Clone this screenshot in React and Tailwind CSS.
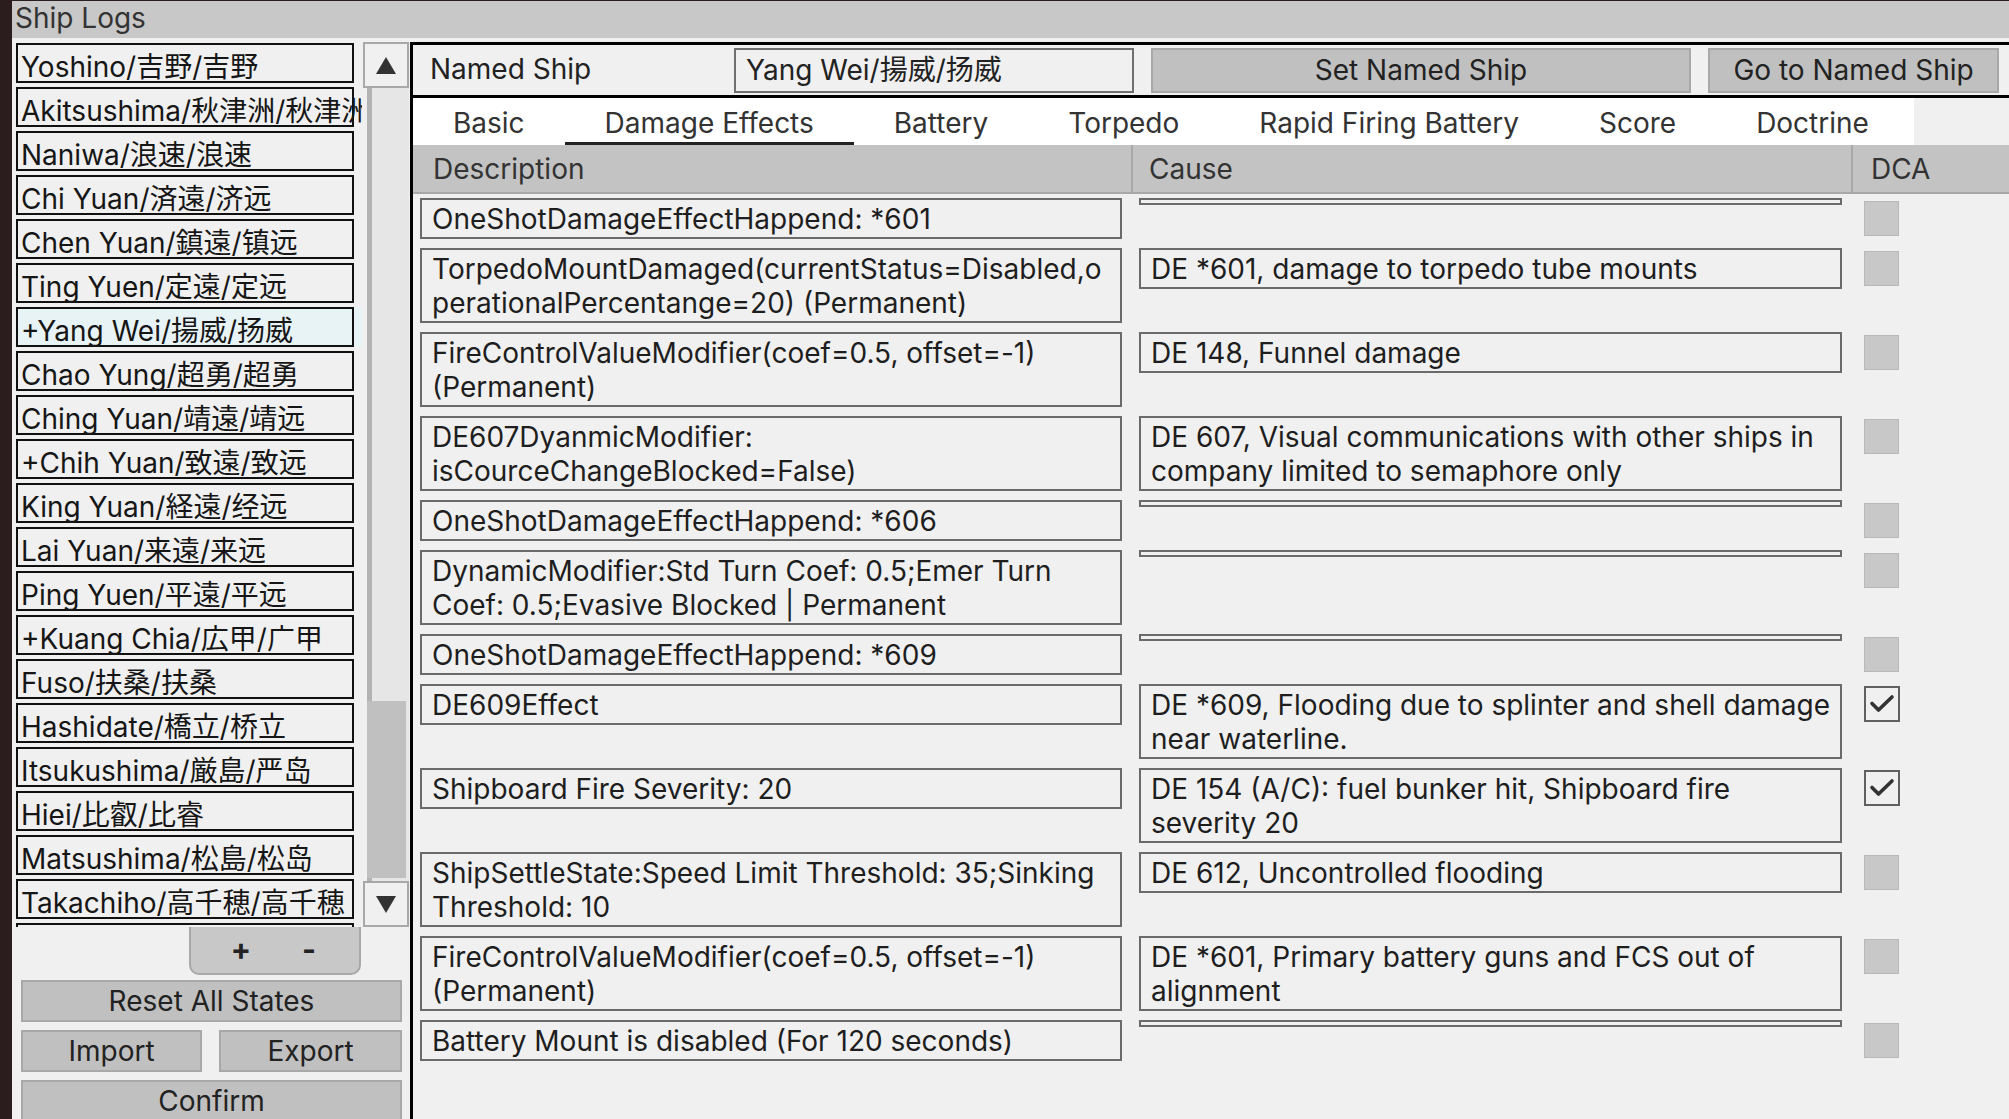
import React from 'react';

// --- DATA ---
const SHIPS = [
  'Yoshino/吉野/吉野',
  'Akitsushima/秋津洲/秋津洲',
  'Naniwa/浪速/浪速',
  'Chi Yuan/済遠/济远',
  'Chen Yuan/鎮遠/镇远',
  'Ting Yuen/定遠/定远',
  '+Yang Wei/揚威/扬威',
  'Chao Yung/超勇/超勇',
  'Ching Yuan/靖遠/靖远',
  '+Chih Yuan/致遠/致远',
  'King Yuan/経遠/经远',
  'Lai Yuan/来遠/来远',
  'Ping Yuen/平遠/平远',
  '+Kuang Chia/広甲/广甲',
  'Fuso/扶桑/扶桑',
  'Hashidate/橋立/桥立',
  'Itsukushima/厳島/严岛',
  'Hiei/比叡/比睿',
  'Matsushima/松島/松岛',
  'Takachiho/高千穂/高千穂',
  'Akagi/赤城/赤城',
];

const SELECTED = '+Yang Wei/揚威/扬威';

const TABS = ['Basic', 'Damage Effects', 'Battery', 'Torpedo', 'Rapid Firing Battery', 'Score', 'Doctrine'];

// lines are broken where the game UI breaks them
const EFFECTS = [
  { desc: 'OneShotDamageEffectHappend: *601', cause: '', dca: false },
  {
    desc: 'TorpedoMountDamaged(currentStatus=Disabled,o\nperationalPercentange=20) (Permanent)',
    cause: 'DE *601, damage to torpedo tube mounts',
    dca: false,
  },
  { desc: 'FireControlValueModifier(coef=0.5, offset=-1)\n(Permanent)', cause: 'DE 148, Funnel damage', dca: false },
  {
    desc: 'DE607DyanmicModifier:\nisCourceChangeBlocked=False)',
    cause: 'DE 607, Visual communications with other ships in\ncompany limited to semaphore only',
    dca: false,
  },
  { desc: 'OneShotDamageEffectHappend: *606', cause: '', dca: false },
  {
    desc: 'DynamicModifier:Std Turn Coef: 0.5;Emer Turn\nCoef: 0.5;Evasive Blocked | Permanent',
    cause: '',
    dca: false,
  },
  { desc: 'OneShotDamageEffectHappend: *609', cause: '', dca: false },
  { desc: 'DE609Effect', cause: 'DE *609, Flooding due to splinter and shell damage\nnear waterline.', dca: true },
  { desc: 'Shipboard Fire Severity: 20', cause: 'DE 154 (A/C): fuel bunker hit, Shipboard fire\nseverity 20', dca: true },
  {
    desc: 'ShipSettleState:Speed Limit Threshold: 35;Sinking\nThreshold: 10',
    cause: 'DE 612, Uncontrolled flooding',
    dca: false,
  },
  {
    desc: 'FireControlValueModifier(coef=0.5, offset=-1)\n(Permanent)',
    cause: 'DE *601, Primary battery guns and FCS out of\nalignment',
    dca: false,
  },
  { desc: 'Battery Mount is disabled (For 120 seconds)', cause: '', dca: false },
];

// --- SMALL PIECES ---
const Arrow = ({ down }) => (
  <svg width="22" height="19" viewBox="0 0 22 19">
    <polygon points={down ? '1,1 21,1 11,18' : '11,1 21,18 1,18'} fill="#333" />
  </svg>
);

const GreyButton = ({ children, className = '' }) => (
  <div
    className={`flex h-[42px] shrink-0 items-center justify-center border-2 border-[#a8a8a8] bg-[#c0c0c0] text-[28px] text-[#222] ${className}`}
  >
    {children}
  </div>
);

const Cell = ({ text, className }) => (
  <div
    className={`shrink-0 whitespace-pre border-2 border-[#6a6a6a] bg-[#f0f0f0] pb-[1px] pl-[10px] pt-[2px] text-[28px] leading-[34px] text-[#1e1e1e] ${className}`}
  >
    {text}
  </div>
);

const Check = ({ on }) =>
  on ? (
    <div className="ml-[22px] mt-[2px] h-[36px] w-[36px] shrink-0 border-2 border-[#606060] bg-[#f0f0f0]">
      <svg viewBox="0 0 32 32" className="h-full w-full">
        <path
          d="M6 15.5 L12.5 22 L26 9"
          fill="none"
          stroke="#333"
          strokeWidth="3.6"
          strokeLinecap="round"
          strokeLinejoin="round"
        />
      </svg>
    </div>
  ) : (
    <div className="ml-[22px] mt-[3px] h-[35px] w-[35px] shrink-0 border border-[#b8b8b8] bg-[#c8c8c8]" />
  );

// --- LEFT PANEL ---
const ShipList = () => (
  <div className="flex w-[398px] shrink-0 flex-col pl-[4px] pt-[4px]">
    <div className="flex h-[885px] shrink-0">
      <div className="w-[346px] shrink-0 overflow-hidden pt-[1px]">
        {SHIPS.map((name) => (
          <div key={name} className={`mb-[4px] h-[40px] ${name === SELECTED ? 'bg-[#e8f3f6]' : ''}`}>
            <div className="h-[40px] w-[338px] whitespace-nowrap border-2 border-[#111] pl-[3px] pt-[8px] text-[28px] leading-[28px] text-[#161616]">
              {name}
            </div>
          </div>
        ))}
      </div>

      {/* scrollbar */}
      <div className="ml-[1px] flex w-[46px] shrink-0 flex-col">
        <div className="flex h-[46px] shrink-0 items-center justify-center border-2 border-[#a8a8a8] bg-[#f0f0f0]">
          <Arrow />
        </div>
        <div className="ml-[4px] flex flex-1 flex-col justify-end border-l-[5px] border-[#b2b2b2] bg-[#e6e6e6] pb-[3px]">
          <div className="-ml-[5px] h-[177px] w-[39px] bg-[#c0c0c0]" />
        </div>
        <div className="flex h-[46px] shrink-0 items-center justify-center border-2 border-[#a8a8a8] bg-[#f0f0f0]">
          <Arrow down />
        </div>
      </div>
    </div>

    <div className="ml-[173px] flex h-[48px] w-[172px] shrink-0 items-center justify-center gap-[28px] rounded-b-[10px] border-2 border-t-0 border-[#a8a8a8] bg-[#c8c8c8] pb-[2px] text-[30px] font-bold text-[#222]">
      <span className="w-[40px] text-center">+</span>
      <span className="w-[40px] text-center">-</span>
    </div>

    <GreyButton className="ml-[5px] mt-[5px] w-[381px]">Reset All States</GreyButton>
    <div className="ml-[5px] mt-[8px] flex w-[381px] shrink-0">
      <GreyButton className="w-[181px]">Import</GreyButton>
      <GreyButton className="ml-[17px] flex-1">Export</GreyButton>
    </div>
    <GreyButton className="ml-[5px] mt-[8px] w-[381px]">Confirm</GreyButton>
  </div>
);

// --- RIGHT PANEL ---
const ShipDetail = () => (
  <div className="mt-[4px] flex min-w-0 flex-1 flex-col border-l-[3px] border-t-[3px] border-black">
    {/* named ship row */}
    <div className="flex h-[53px] shrink-0 items-center border-b-[3px] border-black pl-[17px] pr-[10px] text-[28px] text-[#222]">
      <div className="w-[304px] shrink-0 pb-[2px] leading-[34px]">Named Ship</div>
      <div className="flex h-[45px] w-[400px] shrink-0 items-center border-2 border-[#707070] bg-[#f0f0f0] pl-[10px]">
        Yang Wei/揚威/扬威
      </div>
      <GreyButton className="ml-[17px] h-[45px] w-[540px]">Set Named Ship</GreyButton>
      <GreyButton className="ml-[17px] h-[45px] flex-1">Go to Named Ship</GreyButton>
    </div>

    {/* tabs */}
    <div className="flex h-[47px] w-[1501px] shrink-0 bg-white text-[28px] leading-[34px] text-[#333]">
      {TABS.map((tab) => (
        <div
          key={tab}
          className={`flex h-full items-center whitespace-nowrap border-b-[3px] px-10 pt-[6px] ${
            tab === 'Damage Effects' ? 'border-[#222]' : 'border-transparent'
          }`}
        >
          {tab}
        </div>
      ))}
    </div>

    {/* table header */}
    <div className="flex h-[49px] shrink-0 border-b-2 border-[#a8a8a8] bg-[#c3c3c3] text-[28px] leading-[34px] text-[#333]">
      <div className="flex w-[720px] shrink-0 items-center border-r-2 border-[#a8a8a8] pl-[20px]">Description</div>
      <div className="flex w-[720px] shrink-0 items-center border-r-2 border-[#a8a8a8] pl-[16px]">Cause</div>
      <div className="flex flex-1 items-center pl-[18px]">DCA</div>
    </div>

    {/* rows */}
    <div className="flex flex-col gap-[9px] pl-[7px] pt-[4px]">
      {EFFECTS.map((row, i) => (
        <div key={i} className="flex items-start">
          <Cell text={row.desc} className="w-[702px]" />
          <Cell text={row.cause} className="ml-[17px] w-[703px]" />
          <Check on={row.dca} />
        </div>
      ))}
    </div>
  </div>
);

export default function App() {
  return (
    <div className="flex h-[1119px] w-[2009px] overflow-hidden bg-[#2b1d1d] pl-[12px] pt-[1px] font-['Inter','Noto_Sans_CJK_JP',sans-serif]">
      <div className="flex min-w-0 flex-1 flex-col bg-[#f0f0f0]">
        <div className="h-[37px] shrink-0 bg-[#c8c8c8] pl-[3px] text-[28px] leading-[34px] text-[#333]">Ship Logs</div>
        <div className="flex min-h-0 flex-1">
          <ShipList />
          <ShipDetail />
        </div>
      </div>
    </div>
  );
}
